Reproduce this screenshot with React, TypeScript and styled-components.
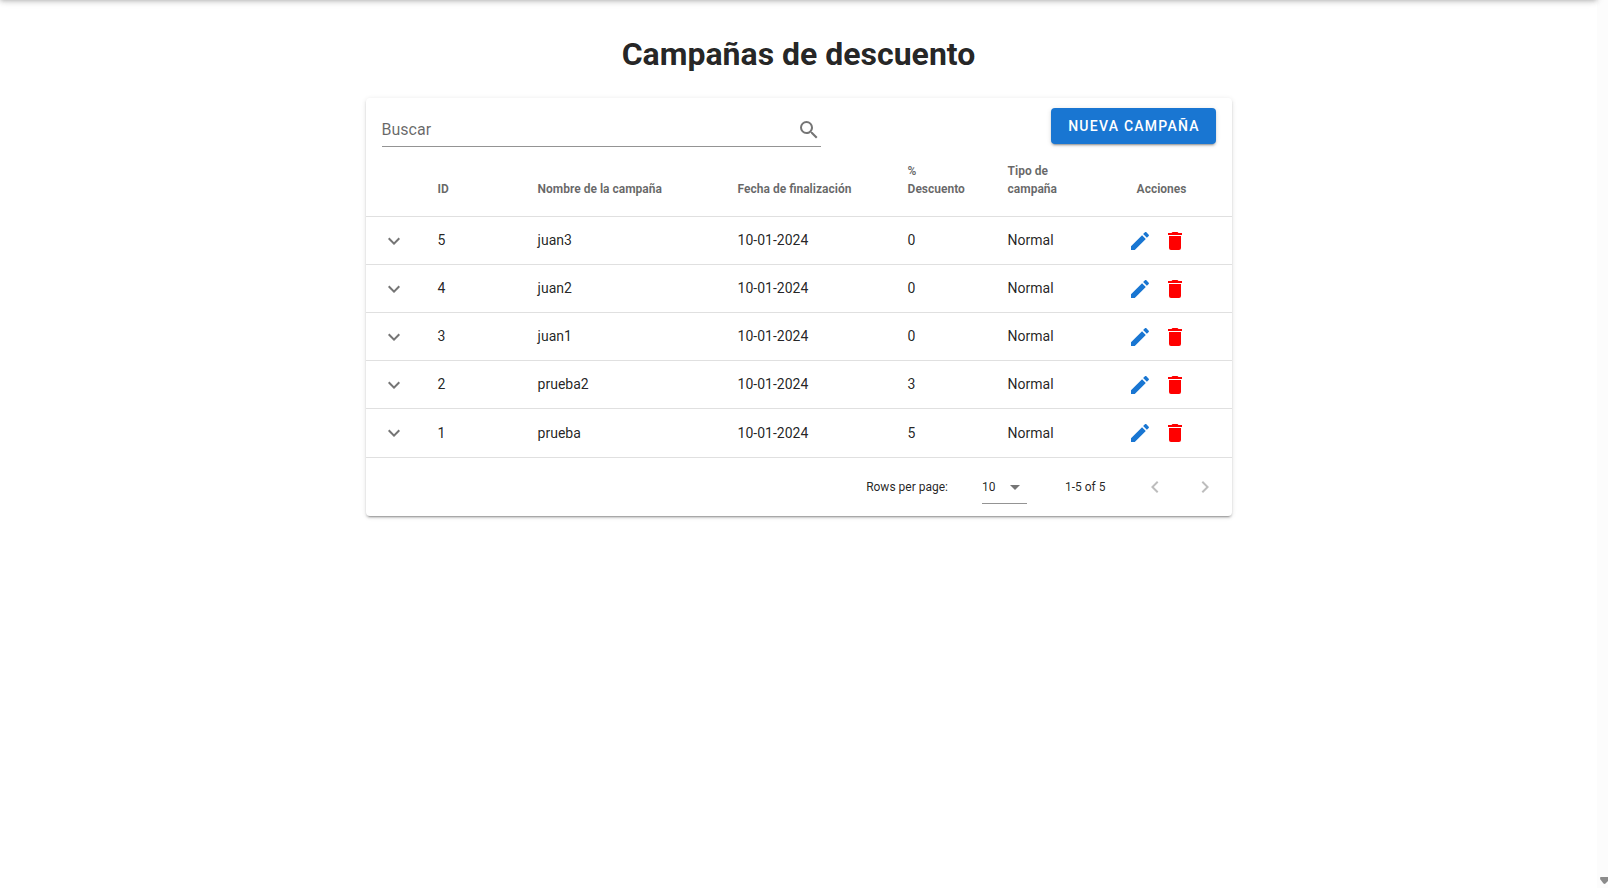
import React from "react";
import styled, { createGlobalStyle } from "styled-components";

const ICONS = {
  magnify:
    "M9.5,3A6.5,6.5 0 0,1 16,9.5C16,11.11 15.41,12.59 14.44,13.73L14.71,14H15.5L20.5,19L19,20.5L14,15.5V14.71L13.73,14.44C12.59,15.41 11.11,16 9.5,16A6.5,6.5 0 0,1 3,9.5A6.5,6.5 0 0,1 9.5,3M9.5,5C7,5 5,7 5,9.5C5,12 7,14 9.5,14C12,14 14,12 14,9.5C14,7 12,5 9.5,5Z",
  pencil:
    "M20.71,7.04C21.1,6.65 21.1,6 20.71,5.63L18.37,3.29C18,2.9 17.35,2.9 16.96,3.29L15.12,5.12L18.87,8.87M3,17.25V21H6.75L17.81,9.93L14.06,6.18L3,17.25Z",
  trash:
    "M19,4H15.5L14.5,3H9.5L8.5,4H5V6H19M6,19A2,2 0 0,0 8,21H16A2,2 0 0,0 18,19V7H6V19Z",
  down: "M7.41,8.58L12,13.17L16.59,8.58L18,10L12,16L6,10L7.41,8.58Z",
  menuDown: "M7,10L12,15L17,10H7Z",
  left: "M15.41,16.58L10.83,12L15.41,7.41L14,6L8,12L14,18L15.41,16.58Z",
  right: "M8.59,16.58L13.17,12L8.59,7.41L10,6L16,12L10,18L8.59,16.58Z",
};

const GlobalStyle = createGlobalStyle`
  *, *::before, *::after { box-sizing: border-box; }
  body {
    margin: 0;
    background: #fff;
    color: rgba(0, 0, 0, 0.87);
    font-family: Roboto, "Liberation Sans", sans-serif;
    line-height: 1.5;
    overflow: hidden;
  }
`;

const Page = styled.div`
  display: flex;
  height: 888px;
`;

const Main = styled.main`
  position: relative;
  flex: 1;
  display: flex;
  flex-direction: column;
  align-items: center;
`;

const AppBar = styled.header`
  position: absolute;
  top: -58px;
  left: 0;
  right: 0;
  height: 56px;
  box-shadow: 0 2px 4px -1px rgba(0, 0, 0, 0.2), 0 4px 5px 0 rgba(0, 0, 0, 0.14),
    0 1px 10px 0 rgba(0, 0, 0, 0.12);
`;

const ScrollTrack = styled.div`
  display: flex;
  align-items: flex-end;
  justify-content: flex-end;
  width: 11px;
  padding-bottom: 4px;
  background: #fcfcfc;
`;

const ScrollArrow = styled.svg`
  display: block;
  width: 8px;
  height: 7px;
  fill: #8b8b8b;
`;

const Title = styled.h1`
  margin: 30px 0 20px;
  font-size: 32px;
  line-height: 48px;
  font-weight: 700;
`;

const Card = styled.section`
  width: 866px;
  height: 417.6px;
  background: #fff;
  border-radius: 4px;
  box-shadow: 0 3px 1px -2px rgba(0, 0, 0, 0.2), 0 2px 2px 0 rgba(0, 0, 0, 0.14),
    0 1px 5px 0 rgba(0, 0, 0, 0.12);
`;

const Toolbar = styled.div`
  display: flex;
  justify-content: space-between;
  align-items: flex-start;
  height: 64px;
  padding: 10px 16px 0;
`;

const SearchField = styled.label`
  display: flex;
  align-items: center;
  justify-content: space-between;
  width: 439px;
  height: 39px;
  padding-top: 5px;
  border-bottom: 1px solid #949494;
  color: rgba(0, 0, 0, 0.6);
`;

const PrimaryButton = styled.button`
  width: 165px;
  height: 36px;
  padding: 0 0 0 2px;
  border: 0;
  border-radius: 4px;
  background: #1976d2;
  color: #fff;
  font: 500 14px/36px Roboto, "Liberation Sans", sans-serif;
  letter-spacing: 1.25px;
  box-shadow: 0 3px 1px -2px rgba(0, 0, 0, 0.2), 0 2px 2px 0 rgba(0, 0, 0, 0.14),
    0 1px 5px 0 rgba(0, 0, 0, 0.12);
`;

const Row = styled.div<{ $tall?: boolean }>`
  display: grid;
  grid-template-columns: 56.1px 100px 200px 170px 100px 100px 1fr;
  align-items: center;
  height: ${(p) => (p.$tall ? 49 : 48)}px;
  border-bottom: 1px solid #e0e0e0;
  font-size: 14px;
  line-height: 21px;
`;

const HeadRow = styled(Row)`
  height: 55px;
  align-items: end;
  padding-bottom: 18px;
  font-size: 12px;
  line-height: 18px;
  font-weight: 700;
  color: rgba(0, 0, 0, 0.6);
`;

const Cell = styled.div<{ $center?: boolean }>`
  padding: 0 16px;
  text-align: ${(p) => (p.$center ? "center" : "left")};
`;

const Actions = styled.div`
  display: flex;
  justify-content: center;
  gap: 11.5px;
  padding: 0 8px 0 0;
`;

const ExpandCell = styled.div`
  padding-left: 16px;
`;

const Glyph = styled.svg<{ $color?: string }>`
  display: block;
  width: 24px;
  height: 24px;
  flex: none;
  fill: ${(p) => p.$color ?? "#757575"};
`;

const Footer = styled.footer`
  display: flex;
  align-items: center;
  justify-content: flex-end;
  height: 58px;
  padding-right: 14.5px;
  font-size: 12px;
`;

const PageSize = styled.div`
  display: flex;
  align-items: center;
  justify-content: space-between;
  width: 45px;
  height: 34px;
  margin: 0 38px 0 34px;
  padding-top: 1px;
  border-bottom: 1px solid #949494;
`;

const Pager = styled.div`
  display: flex;
  gap: 26px;
  margin-left: 37.5px;
`;

function Icon({ name, color }: { name: keyof typeof ICONS; color?: string }) {
  return (
    <Glyph viewBox="0 0 24 24" $color={color} aria-hidden="true">
      <path d={ICONS[name]} />
    </Glyph>
  );
}

const campaigns = [
  { id: 5, name: "juan3", end: "10-01-2024", discount: 0, type: "Normal" },
  { id: 4, name: "juan2", end: "10-01-2024", discount: 0, type: "Normal" },
  { id: 3, name: "juan1", end: "10-01-2024", discount: 0, type: "Normal" },
  { id: 2, name: "prueba2", end: "10-01-2024", discount: 3, type: "Normal" },
  { id: 1, name: "prueba", end: "10-01-2024", discount: 5, type: "Normal" },
];

export default function App() {
  return (
    <Page>
      <GlobalStyle />
      <Main>
        <AppBar />
        <Title>Campañas de descuento</Title>
        <Card>
          <Toolbar>
            <SearchField>
              <span>Buscar</span>
              <Icon name="magnify" />
            </SearchField>
            <PrimaryButton>NUEVA CAMPAÑA</PrimaryButton>
          </Toolbar>
          <HeadRow>
            <span />
            <Cell>ID</Cell>
            <Cell>Nombre de la campaña</Cell>
            <Cell>Fecha de finalización</Cell>
            <Cell>% Descuento</Cell>
            <Cell>Tipo de campaña</Cell>
            <Cell $center>Acciones</Cell>
          </HeadRow>
          {campaigns.map((c, i) => (
            <Row key={c.id} $tall={i === campaigns.length - 1}>
              <ExpandCell>
                <Icon name="down" />
              </ExpandCell>
              <Cell>{c.id}</Cell>
              <Cell>{c.name}</Cell>
              <Cell>{c.end}</Cell>
              <Cell>{c.discount}</Cell>
              <Cell>{c.type}</Cell>
              <Actions>
                <Icon name="pencil" color="#1976d2" />
                <Icon name="trash" color="#ff0000" />
              </Actions>
            </Row>
          ))}
          <Footer>
            <span>Rows per page:</span>
            <PageSize>
              <span>10</span>
              <Icon name="menuDown" />
            </PageSize>
            <span>1-5 of 5</span>
            <Pager>
              <Icon name="left" color="#bdbdbd" />
              <Icon name="right" color="#bdbdbd" />
            </Pager>
          </Footer>
        </Card>
      </Main>
      <ScrollTrack>
        <ScrollArrow viewBox="0 0 8 7">
          <path d="M0,1Q0,0 1,0H8V4L5.5,6.5Q4.5,7.3 3.5,6.5L0.4,2.5Z" />
        </ScrollArrow>
      </ScrollTrack>
    </Page>
  );
}
